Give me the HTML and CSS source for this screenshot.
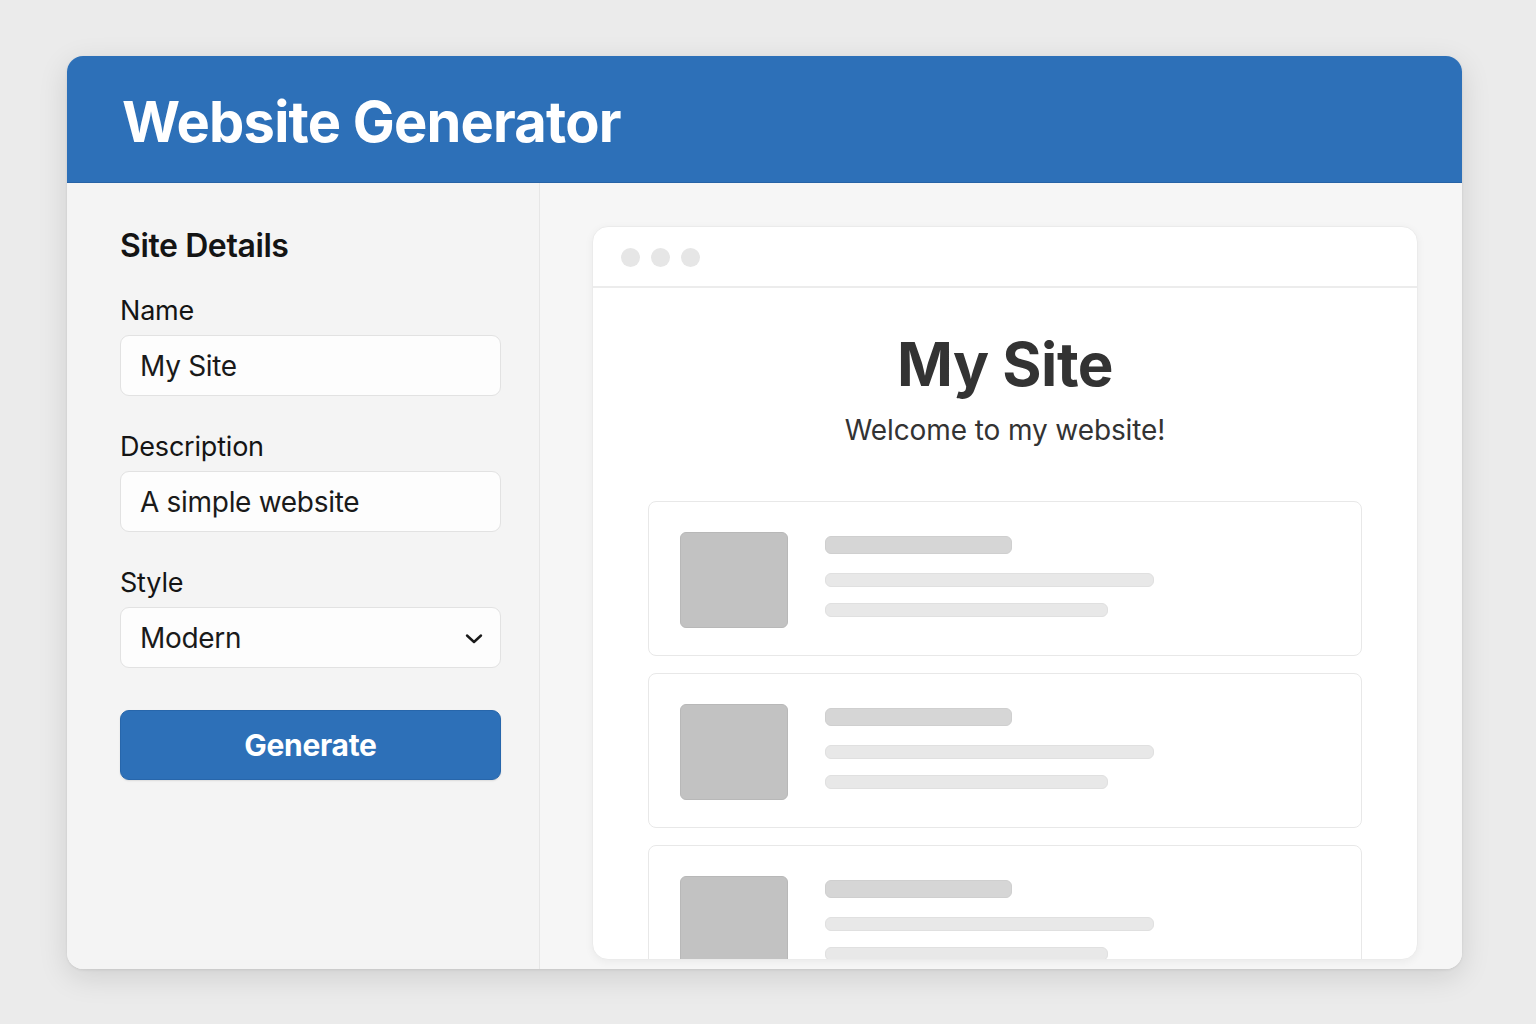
FILE: index.html
```html
<!DOCTYPE html>
<html lang="en">
<head>
<meta charset="utf-8">
<title>Website Generator</title>
<link rel="stylesheet" href="styles.css">
</head>
<body>
<div class="app">
  <header class="app-header">
    <h1 class="app-title">Website Generator</h1>
  </header>
  <main class="app-main">
    <aside class="sidebar">
      <h2 class="sidebar-title">Site Details</h2>
      <div class="field">
        <label class="field-label">Name</label>
        <div class="input">My Site</div>
      </div>
      <div class="field">
        <label class="field-label">Description</label>
        <div class="input">A simple website</div>
      </div>
      <div class="field">
        <label class="field-label">Style</label>
        <div class="input select">
          <span>Modern</span>
          <svg class="chevron" width="20" height="12" viewBox="0 0 20 12"><path d="M3 2.5 L10 9 L17 2.5" fill="none" stroke="#1a1a1a" stroke-width="2.4" stroke-linecap="round" stroke-linejoin="round"/></svg>
        </div>
      </div>
      <button class="btn">Generate</button>
    </aside>
    <section class="preview">
      <div class="browser">
        <div class="browser-bar">
          <span class="dot"></span><span class="dot"></span><span class="dot"></span>
        </div>
        <div class="browser-body">
          <h2 class="site-title">My Site</h2>
          <p class="site-sub">Welcome to my website!</p>
          <div class="items">
            <div class="item">
              <div class="thumb"></div>
              <div class="lines">
                <div class="bar bar-title"></div>
                <div class="bar bar-line1"></div>
                <div class="bar bar-line2"></div>
              </div>
            </div>
            <div class="item">
              <div class="thumb"></div>
              <div class="lines">
                <div class="bar bar-title"></div>
                <div class="bar bar-line1"></div>
                <div class="bar bar-line2"></div>
              </div>
            </div>
            <div class="item">
              <div class="thumb"></div>
              <div class="lines">
                <div class="bar bar-title"></div>
                <div class="bar bar-line1"></div>
                <div class="bar bar-line2"></div>
              </div>
            </div>
          </div>
        </div>
      </div>
    </section>
  </main>
</div>
</body>
</html>
```

FILE: styles.css
```css
* { box-sizing: border-box; }
html, body { margin: 0; padding: 0; }
body {
  width: 1536px;
  height: 1024px;
  background: #ebebeb;
  font-family: Inter, "Liberation Sans", Arial, sans-serif;
  color: #1a1a1a;
  overflow: hidden;
  padding-top: 56px;
  padding-left: 67px;
}
.app {
  width: 1395px;
  height: 913px;
  border-radius: 16px;
  overflow: hidden;
  background: #f4f4f4;
  box-shadow: 0 8px 30px rgba(0,0,0,0.12), 0 1px 3px rgba(0,0,0,0.08);
  display: flex;
  flex-direction: column;
}
.app-header {
  height: 127px;
  flex: none;
  background: #2d70b8;
  border-bottom: 1px solid #2763a6;
  display: flex;
  align-items: center;
  padding-left: 55px;
}
.app-title {
  margin: 0;
  color: #fff;
  font-size: 56px;
  font-weight: 700;
  letter-spacing: -0.8px;
  line-height: 1;
  padding-top: 6px;
}
.app-main {
  flex: 1;
  display: flex;
  min-height: 0;
}
.sidebar {
  width: 473px;
  flex: none;
  background: #f4f4f4;
  border-right: 1px solid #e6e6e6;
  padding: 44px 38px 0 53px;
  display: flex;
  flex-direction: column;
}
.sidebar-title {
  margin: 0 0 30px;
  font-size: 32px;
  font-weight: 600;
  letter-spacing: -0.4px;
  line-height: 38px;
  color: #141414;
}
.field { margin-bottom: 35px; }
.field-label {
  display: block;
  font-size: 27px;
  line-height: 32px;
  margin-bottom: 8px;
  color: #141414;
  letter-spacing: -0.2px;
}
.input {
  height: 61px;
  background: #fdfdfd;
  border: 1.5px solid #e2e2e2;
  border-radius: 9px;
  padding: 0 19px;
  display: flex;
  align-items: center;
  font-size: 28px;
  color: #1a1a1a;
  letter-spacing: -0.3px;
}
.select { justify-content: space-between; padding-right: 16px; }
.chevron { margin-top: 2px; }
.btn {
  margin-top: 7px;
  height: 70px;
  width: 100%;
  border: 1px solid #2766ab;
  border-radius: 9px;
  background: #2d70b8;
  color: #fff;
  font-family: inherit;
  font-size: 30px;
  font-weight: 700;
  letter-spacing: -0.3px;
  box-shadow: 0 1px 2px rgba(0,0,0,0.1);
}
.preview {
  flex: 1;
  background: #f6f6f6;
  padding: 43px 44px 9px 52px;
  display: flex;
}
.browser {
  flex: 1;
  background: #fff;
  border-radius: 16px;
  border: 1px solid #ebebeb;
  box-shadow: 0 2px 8px rgba(0,0,0,0.05);
  overflow: hidden;
  display: flex;
  flex-direction: column;
}
.browser-bar {
  height: 61px;
  flex: none;
  border-bottom: 2px solid #ececec;
  display: flex;
  align-items: center;
  gap: 11px;
  padding-left: 28px;
  padding-top: 2px;
}
.dot {
  width: 19px;
  height: 19px;
  border-radius: 50%;
  background: #e6e6e6;
}
.browser-body {
  flex: 1;
  display: flex;
  flex-direction: column;
  align-items: center;
  padding: 38px 55px 0 55px;
  min-height: 0;
}
.site-title {
  margin: 0;
  font-size: 60px;
  font-weight: 700;
  color: #333;
  letter-spacing: -0.5px;
  line-height: 76px;
}
.site-sub {
  margin: 11px 0 0;
  font-size: 28px;
  line-height: 34px;
  color: #333;
  letter-spacing: -0.1px;
}
.items {
  align-self: stretch;
  margin-top: 54px;
  display: flex;
  flex-direction: column;
  gap: 17px;
}
.item {
  height: 155px;
  flex: none;
  border: 1.5px solid #e8e8e8;
  border-radius: 8px;
  padding: 30px 31px;
  display: flex;
  gap: 37px;
}
.thumb {
  width: 108px;
  height: 96px;
  flex: none;
  background: #c2c2c2;
  border: 1px solid #b8b8b8;
  border-radius: 6px;
}
.lines { padding-top: 4px; display: flex; flex-direction: column; }
.bar { border-radius: 6px; }
.bar-title { width: 187px; height: 18px; background: #d6d6d6; border: 1px solid #cfcfcf; }
.bar-line1 { width: 329px; height: 14px; background: #e8e8e8; border: 1px solid #e0e0e0; margin-top: 19px; }
.bar-line2 { width: 283px; height: 14px; background: #e8e8e8; border: 1px solid #e0e0e0; margin-top: 16px; }
```
